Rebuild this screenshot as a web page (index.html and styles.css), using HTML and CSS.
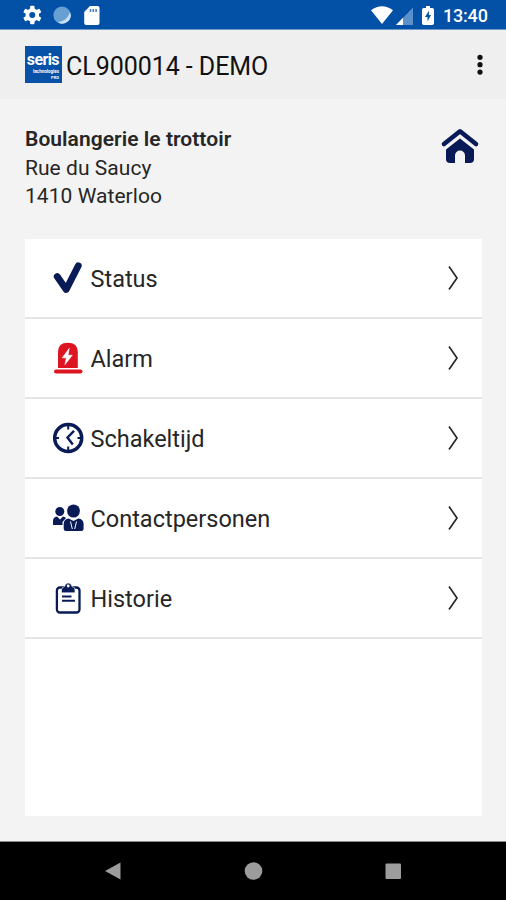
FILE: index.html
```html
<!DOCTYPE html>
<html lang="nl">
<head>
<meta charset="utf-8">
<title>CL900014 - DEMO</title>
<link rel="stylesheet" href="styles.css">
</head>
<body>
<div class="screen">
  <header class="status-bar">
    <svg class="status-icons" width="90" height="30" viewBox="0 0 90 30">
      <g transform="translate(10.3 15)" fill="#fff">
        <circle r="6.8"/>
        <rect x="-2.200" y="-9.300" width="4.400" height="18.600" rx="1"/><rect x="-2.200" y="-9.300" width="4.400" height="18.600" rx="1" transform="rotate(60)"/><rect x="-2.200" y="-9.300" width="4.400" height="18.600" rx="1" transform="rotate(120)"/>
        <circle r="3" fill="#0251a7"/>
      </g>
      <circle cx="40" cy="15.200" r="8.600" fill="#689fd3"/>
      <path d="M48 12a8.200 8.200 0 0 1-12 10.200Q45.500 21 48 12Z" fill="#c5e0f5"/>
      <path d="M68 6h7.500a2 2 0 0 1 2 2v15a2 2 0 0 1-2 2H64.200a2 2 0 0 1-2-2V12Z" fill="#fff"/>
      <path d="M68.500 9v3M71.300 9v3M74.100 9v3" stroke="#477fbd" stroke-width="1.600"/>
    </svg>
    <div class="status-right">
      <svg width="66" height="30" viewBox="0 0 66 30">
        <path d="M0 10.200Q11 2.500 22 10.200L11 24Z" fill="#fff"/>
        <path d="M42 7.500V25H25Z" fill="#5b91cb"/><path d="M32 17.800V25H25Z" fill="#fff"/>
        <path d="M55 6h4v2h2.200q1.800 0 1.800 1.800v13.400q0 1.800-1.800 1.800h-8.400Q51 25 51 23.200V9.800Q51 8 52.800 8H55Z" fill="#fff"/>
        <path d="M58 10.500L54 17h2.500v4.500L60 15h-2.200Z" fill="#0251a7"/>
      </svg>
      <span class="clock">13:40</span>
    </div>
  </header>

  <div class="app-bar">
    <div class="logo"><span class="logo-name">seris</span><span class="logo-sub">technologies</span><span class="logo-pro">PRO</span></div>
    <h1 class="title">CL900014 - DEMO</h1>
    <svg class="more" width="8" height="24" viewBox="0 0 8 24"><circle cx="4" cy="4.300" r="2.600"/><circle cx="4" cy="11.700" r="2.600"/><circle cx="4" cy="19.100" r="2.600"/></svg>
  </div>

  <main class="content">
    <section class="site">
      <address class="address"><strong class="name">Boulangerie le trottoir</strong><span class="street">Rue du Saucy</span><span class="city">1410 Waterloo</span></address>
      <svg class="home" width="38" height="36" viewBox="0 0 38 36">
        <path d="M3 16L19 3.300L35 16" fill="none" stroke="#091b57" stroke-width="4.600" stroke-linecap="round" stroke-linejoin="round"/>
        <path d="M19 10.500L33 21.500V31q0 4-4 4h-5V27.500a5 5 0 0 0-10 0V35H9q-4 0-4-4V21.500Z" fill="#091b57"/>
      </svg>
    </section>

    <ul class="menu">
      <li class="item">
        <svg class="icon" viewBox="0 0 32 32"><path d="M5.200 14.500L14.200 27.500L26.300 3.800" fill="none" stroke="#091b57" stroke-width="6.800" stroke-linecap="round" stroke-linejoin="round"/></svg>
        <span class="label">Status</span>
        <svg class="arrow" viewBox="0 0 12 26"><path d="M2 1.500L10 13L2 24.500"/></svg>
      </li>
      <li class="item">
        <svg class="icon" viewBox="0 0 32 32"><path d="M6 26V10Q6 .7 15.800 .7Q25.800 .7 25.800 10V26Z" fill="#dd1422"/><rect x="2" y="27.500" width="28.500" height="4" rx="2" fill="#dd1422"/><path d="M17.200 6.500L10.300 15.800H14.400L13 22.500L20.200 13.300H16Z" fill="#fff" stroke="#fff" stroke-width=".7"/></svg>
        <span class="label">Alarm</span>
        <svg class="arrow" viewBox="0 0 12 26"><path d="M2 1.500L10 13L2 24.500"/></svg>
      </li>
      <li class="item">
        <svg class="icon" viewBox="0 0 32 32"><g fill="none" stroke="#091b57"><circle cx="16.200" cy="16" r="13.500" stroke-width="3.500"/><path d="M16.200 4v3.500M16.200 24.500v3.500M4 16h3M25.500 16h3" stroke-width="2"/><path d="M22 8.800L15.500 15.500L20.800 22.500" stroke-width="2.400"/></g></svg>
        <span class="label">Schakeltijd</span>
        <svg class="arrow" viewBox="0 0 12 26"><path d="M2 1.500L10 13L2 24.500"/></svg>
      </li>
      <li class="item">
        <svg class="icon" viewBox="0 -1 32 32">
          <g fill="#091b57"><circle cx="7.800" cy="8.500" r="4.500"/><path d="M1 22V18q0-4 4-4.500l3 3 3-3q2 0 3 1.500l-3.500 4V22Z"/>
          <ellipse cx="21.500" cy="8" rx="6.400" ry="6.600"/><path d="M14 28q-2.300 0-2.300-2.300V21q0-4.800 5-5.500l4.800 2.500 4.800-2.500q5.300.7 5.300 5.500v4.700q0 2.300-2.300 2.300Z"/></g>
          <path d="M18.500 18.500L20.300 26M24.500 18.500L22.700 26" fill="none" stroke="#fff" stroke-width="1"/>
        </svg>
        <span class="label">Contactpersonen</span>
        <svg class="arrow" viewBox="0 0 12 26"><path d="M2 1.500L10 13L2 24.500"/></svg>
      </li>
      <li class="item">
        <svg class="icon" viewBox="0 0 32 32"><rect x="4.900" y="5.500" width="22.600" height="25" rx="3" fill="#fff" stroke="#091b57" stroke-width="2.300"/><path d="M9.500 10.800V8Q9.500 5 12.500 4.600Q13.300 1 16.300 1T20 4.600Q23 5 23 8V10.800Z" fill="#091b57" stroke="#fff" stroke-width=".6"/><circle cx="16.200" cy="4" r="1.400" fill="#fff"/><path d="M10 14.500h9.500M10 18.700h13" stroke="#091b57" stroke-width="2"/></svg>
        <span class="label">Historie</span>
        <svg class="arrow" viewBox="0 0 12 26"><path d="M2 1.500L10 13L2 24.500"/></svg>
      </li>
    </ul>
  </main>

  <nav class="nav-bar">
    <svg width="20" height="20" viewBox="0 0 20 20"><path d="M2 10L17.500 1.500V18.500Z"/></svg>
    <svg width="20" height="20" viewBox="0 0 20 20"><circle cx="10.500" cy="10" r="8.800"/></svg>
    <svg width="20" height="20" viewBox="0 0 20 20"><rect x="2.500" y="2.500" width="15.500" height="15.500" rx="1"/></svg>
  </nav>
</div>
</body>
</html>
```

FILE: styles.css
```css
* { box-sizing: border-box; }
body { margin: 0; font-family: Roboto, "Liberation Sans", sans-serif; color: #262626; }
svg { display: block; flex: none; overflow: visible; }
.screen { width: 506px; height: 900px; display: flex; flex-direction: column; background: #f3f3f3; overflow: hidden; }
.status-bar { height: 30px; flex: none; display: flex; justify-content: space-between; padding: 0 18px 0 22px; background: #0251a7; border-bottom: 1px solid #7199c8; }
.status-right { display: flex; gap: 6px; }
.clock { width: 45px; font-size: 18px; font-weight: 500; line-height: 32px; letter-spacing: -.2px; color: #fff; white-space: nowrap; }
.app-bar { height: 69px; flex: none; display: flex; align-items: center; padding: 1px 22px 0 25px; background: #efefef; }
.logo { width: 37px; height: 37px; flex: none; display: flex; flex-direction: column; align-items: flex-end; padding: 5px 3px 0 0; background: #0751a7; color: #fff; margin-top: -1px; }
.logo-name { font: bold 16px/18px Roboto, sans-serif; letter-spacing: -.6px; }
.logo-sub { font-size: 4.500px; line-height: 5px; font-weight: 700; }
.logo-pro { margin-top: 1px; font-size: 4px; line-height: 5px; font-weight: 700; }
.title { margin: 3px 0 0 4px; font-size: 25px; line-height: 30px; font-weight: 400; letter-spacing: -.05px; color: #111; flex: 1; white-space: nowrap; }
.more { fill: #111; }
.content { flex: 1; display: flex; flex-direction: column; padding: 26px 24px 25px 25px; }
.site { height: 114px; flex: none; display: flex; justify-content: space-between; padding-right: 3px; }
.address { display: flex; flex-direction: column; font-style: normal; font-size: 21px; line-height: 28.500px; letter-spacing: .05px; }
.name { font-weight: 600; }
.home { margin-top: 3px; }
.menu { list-style: none; margin: 0; padding: 0; flex: 1; background: #fff; }
.item { height: 80px; display: flex; align-items: center; padding: 0 23px 0 27px; border-bottom: 2px solid #e5e5e5; }
.icon { width: 32px; height: 32px; }
.label { flex: 1; margin: 1px 0 0 6.500px; font-size: 23.500px; line-height: 30px; white-space: nowrap; }
.arrow { width: 12px; height: 26px; fill: none; stroke: #292929; stroke-width: 1.700; }
.nav-bar { height: 59px; flex: none; display: flex; justify-content: space-between; align-items: center; padding: 0 103px; background: #000; border-top: 1px solid #8c8c8c; fill: #9c9c9c; }
```
